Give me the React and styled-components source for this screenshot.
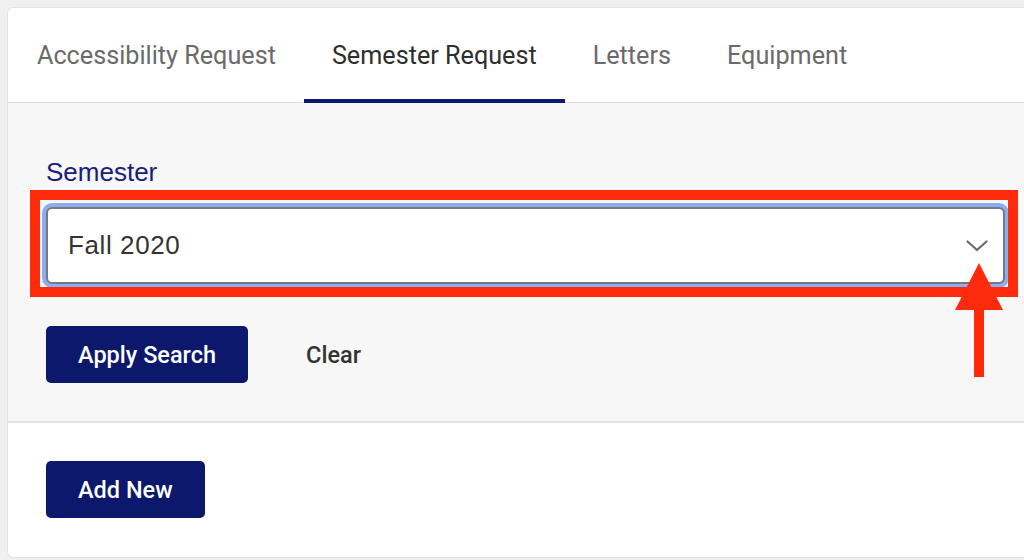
import React, { useState } from 'react'
import styled, { createGlobalStyle } from 'styled-components'

const GlobalStyle = createGlobalStyle`
    body {
        margin: 0;
        background: #f0f0f0;
        overflow: hidden;
        font-family: Roboto, "Liberation Sans", sans-serif;
    }
`

const Page = styled.div`
    padding: 7px 0 0 7px;
    height: 560px;
    box-sizing: border-box;
`

const Card = styled.div`
    width: 1027px;
    height: 551px;
    box-sizing: border-box;
    background: #fff;
    border: 1px solid #e3e3e3;
    border-right: none;
    border-radius: 6px 0 0 6px;
    display: flex;
    flex-direction: column;
`

const TabBar = styled.div`
    display: flex;
    height: 95px;
    box-sizing: border-box;
    padding-left: 1px;
    border-bottom: 1px solid #dcdcdc;
`

const Tab = styled.div`
    display: flex;
    align-items: center;
    padding: 4px 28px 0;
    margin-bottom: -1px;
    font-size: 25.2px;
    font-weight: 400;
    color: ${p => (p.active ? '#2e2e2e' : '#6a6a6a')};
    border-bottom: 4px solid ${p => (p.active ? '#0b1a6e' : 'transparent')};
    cursor: pointer;
`

const Filters = styled.div`
    background: #f7f7f7;
    padding: 54px 29px 38px 38px;
    border-bottom: 2px solid #e2e2e2;
`

const Label = styled.div`
    font-family: "Liberation Sans", Arial, sans-serif;
    font-size: 26px;
    line-height: 30px;
    color: #17207a;
    margin-bottom: 20px;
`

const SelectWrap = styled.div`
    position: relative;
`

const Select = styled.div`
    height: 77px;
    box-sizing: border-box;
    border: 2px solid #76787c;
    border-radius: 6px;
    background: #fff;
    box-shadow: 0 0 0 4px #8cadf2;
    display: flex;
    align-items: center;
    justify-content: space-between;
    padding: 0 15px 0 20px;
    font-family: "Liberation Sans", Arial, sans-serif;
    font-size: 26px;
    letter-spacing: 0.6px;
    color: #333;
`

const Highlight = styled.div`
    position: absolute;
    top: -17px;
    left: -16px;
    right: -13px;
    bottom: -13px;
    border: 10px solid #fd2a0c;
    pointer-events: none;
`

const Pointer = styled.svg`
    position: absolute;
    left: 909px;
    top: 56px;
    pointer-events: none;
`

const Actions = styled.div`
    display: flex;
    align-items: center;
    gap: 58px;
    margin-top: 42px;
`

const Button = styled.button`
    height: 57px;
    border: none;
    border-radius: 5px;
    background: ${p => (p.plain ? 'transparent' : '#0b186b')};
    color: ${p => (p.plain ? '#333' : '#fff')};
    padding: ${p => (p.plain ? '0' : '0 32px')};
    font-family: Roboto, "Liberation Sans", sans-serif;
    font-size: 23.5px;
    font-weight: 500;
    cursor: pointer;
`

const Results = styled.div`
    padding: 38px 38px;
`

function Chevron() {
    return (
        <svg width="22" height="12" viewBox="0 0 22 12" fill="none">
            <path d="M1.5 1.5 L11 10 L20.5 1.5" stroke="#6a6a6a" strokeWidth="2.2" strokeLinecap="round" strokeLinejoin="round" />
        </svg>
    )
}

export default function App() {
    const [tab, setTab] = useState('Semester Request')
    const tabs = ['Accessibility Request', 'Semester Request', 'Letters', 'Equipment']

    return (
        <Page>
            <GlobalStyle />
            <Card>
                <TabBar>
                    {tabs.map(t => (
                        <Tab key={t} active={t === tab} onClick={() => setTab(t)}>{t}</Tab>
                    ))}
                </TabBar>
                <Filters>
                    <Label>Semester</Label>
                    <SelectWrap>
                        <Select>
                            <span>Fall 2020</span>
                            <Chevron />
                        </Select>
                        <Highlight />
                        <Pointer width="48" height="116" viewBox="0 0 48 116">
                            <polygon points="24,0 48,47 0,47" fill="#fd2a0c" />
                            <rect x="19" y="46" width="10" height="68" fill="#fd2a0c" />
                        </Pointer>
                    </SelectWrap>
                    <Actions>
                        <Button>Apply Search</Button>
                        <Button plain>Clear</Button>
                    </Actions>
                </Filters>
                <Results>
                    <Button>Add New</Button>
                </Results>
            </Card>
        </Page>
    )
}
